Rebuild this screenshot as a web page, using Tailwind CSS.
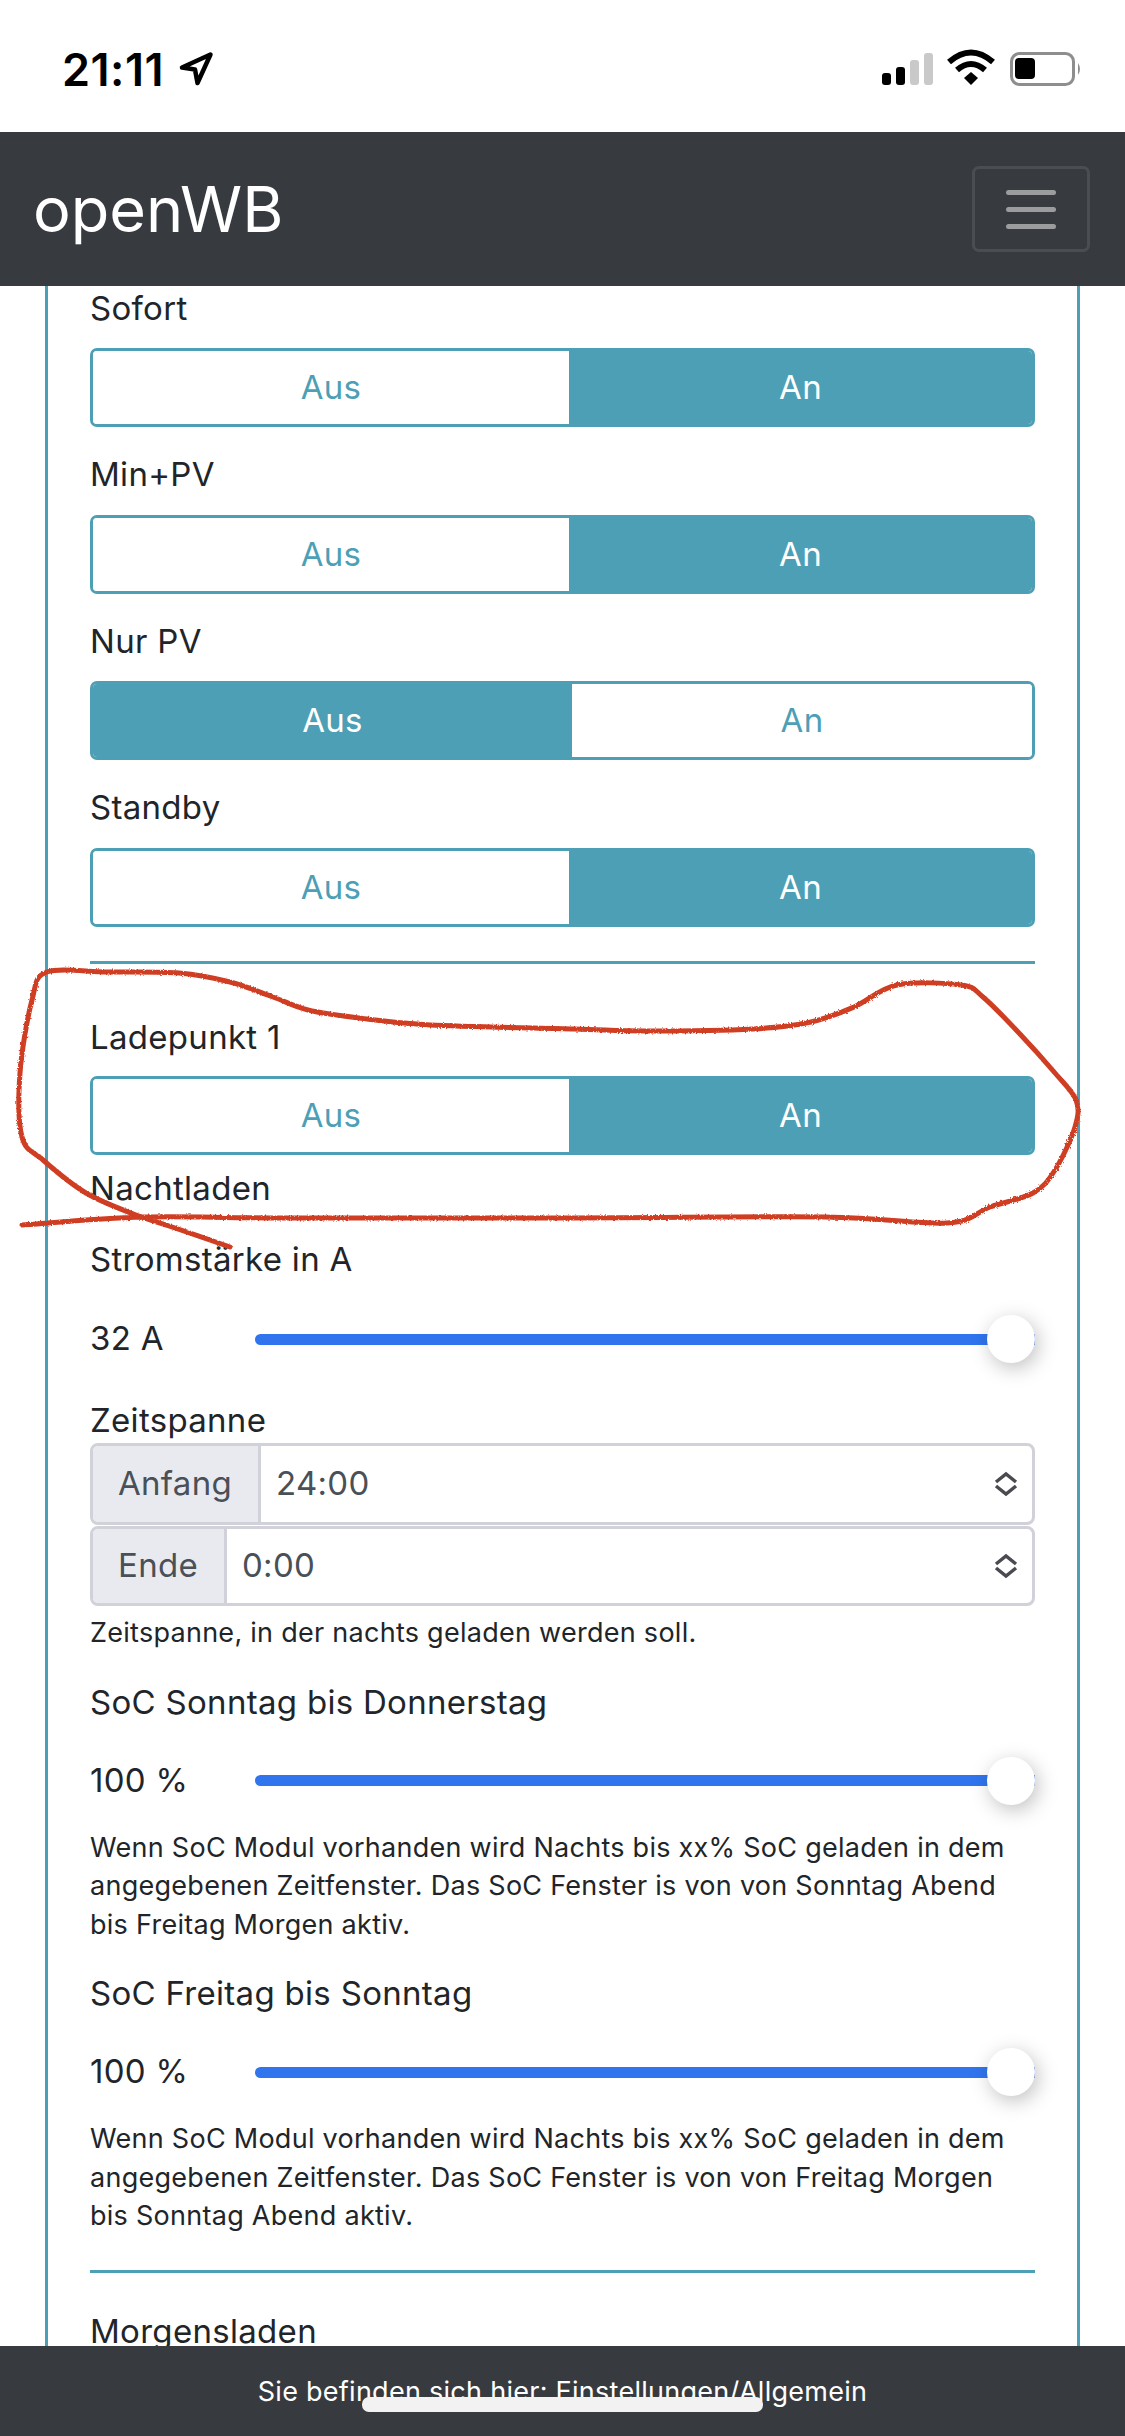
<!DOCTYPE html>
<html lang="de">
<head>
  <meta charset="UTF-8" />
  <title>openWB</title>
  <script src="https://cdn.jsdelivr.net/npm/@tailwindcss/browser@4"></script>
</head>
<body class="bg-white">
  <div class="relative w-[1125px] h-[2436px] overflow-hidden flex flex-col font-['Inter',sans-serif] text-[33px] tracking-[0.3px] text-[#212529]">

    <!-- Status bar -->
    <div class="h-[132px] shrink-0 flex justify-between bg-white text-black">
      <div class="flex items-center h-[138px] pl-[62px] gap-[14px]">
        <span class="text-[45px] font-semibold leading-none tracking-[0.5px]">21:11</span>
        <svg width="36" height="36" viewBox="0 0 36 36" fill="none" stroke="#000" stroke-width="4.5" stroke-linejoin="round"><path d="M32.5 3.5 L4 16.5 L17 18.5 L19.5 32 Z" /></svg>
      </div>
      <svg class="mr-[43px]" width="203" height="132" viewBox="879 0 203 132">
        <rect x="882" y="73" width="9" height="12" rx="3" fill="#000" />
        <rect x="896" y="67" width="9" height="18" rx="3" fill="#000" />
        <rect x="910" y="60" width="9" height="25" rx="3" fill="#c9c9c9" />
        <rect x="924" y="53" width="9" height="32" rx="3" fill="#c9c9c9" />
        <path d="M949 62 Q971 43 993 62" fill="none" stroke="#000" stroke-width="6" />
        <path d="M957 70 Q971 58 985 70" fill="none" stroke="#000" stroke-width="6" />
        <path d="M964 78 L971 72 L978 78 L971 85 Z" fill="#000" />
        <rect x="1011.5" y="53.5" width="62" height="31" rx="8" fill="none" stroke="#8e8e8e" stroke-width="3" />
        <rect x="1015" y="58" width="20" height="21" rx="4" fill="#000" />
        <path d="M1078 63 Q1082 69 1078 75 Z" fill="#8e8e8e" />
      </svg>
    </div>

    <!-- Navbar -->
    <nav class="h-[154px] shrink-0 bg-[#373b3f] flex items-center justify-between pl-[33px] pr-[35px] z-10">
      <span class="text-white text-[63px] leading-none tracking-normal">openWB</span>
      <div class="w-[118px] h-[86px] border-[3px] border-[#4a4e52] rounded-[7px] flex flex-col items-center justify-center gap-[12px]">
        <div class="w-[50px] h-[5px] rounded-full bg-[#9a9c9e]"></div>
        <div class="w-[50px] h-[5px] rounded-full bg-[#9a9c9e]"></div>
        <div class="w-[50px] h-[5px] rounded-full bg-[#9a9c9e]"></div>
      </div>
    </nav>

    <!-- Content -->
    <main class="flex-1 min-h-0 overflow-hidden">
      <div class="mx-[45px] px-[42px] border-x-[3px] border-[#4c9fb5] h-[2100px]">
        <div class="h-[50px] leading-[50px] -mt-[3px]">Sofort</div>
        <div class="h-[79px] mt-[15px] flex border-[3px] border-[#4c9fb5] rounded-[7px] overflow-hidden">
          <div class="w-[476px] flex items-center justify-center text-[#4c9fb5] bg-white">Aus</div>
          <div class="flex-1 flex items-center justify-center text-white bg-[#4c9fb5]">An</div>
        </div>

        <div class="h-[50px] leading-[50px] mt-[22px]">Min+PV</div>
        <div class="h-[79px] mt-[16px] flex border-[3px] border-[#4c9fb5] rounded-[7px] overflow-hidden">
          <div class="w-[476px] flex items-center justify-center text-[#4c9fb5] bg-white">Aus</div>
          <div class="flex-1 flex items-center justify-center text-white bg-[#4c9fb5]">An</div>
        </div>

        <div class="h-[50px] leading-[50px] mt-[22px]">Nur PV</div>
        <div class="h-[79px] mt-[15px] flex border-[3px] border-[#4c9fb5] rounded-[7px] overflow-hidden">
          <div class="w-[479px] flex items-center justify-center text-white bg-[#4c9fb5]">Aus</div>
          <div class="flex-1 flex items-center justify-center text-[#4c9fb5] bg-white">An</div>
        </div>

        <div class="h-[50px] leading-[50px] mt-[22px]">Standby</div>
        <div class="h-[79px] mt-[16px] flex border-[3px] border-[#4c9fb5] rounded-[7px] overflow-hidden">
          <div class="w-[476px] flex items-center justify-center text-[#4c9fb5] bg-white">Aus</div>
          <div class="flex-1 flex items-center justify-center text-white bg-[#4c9fb5]">An</div>
        </div>

        <div class="h-[3px] mt-[34px] bg-[#4c9fb5]"></div>

        <div class="h-[50px] leading-[50px] mt-[48px]">Ladepunkt 1</div>
        <div class="h-[79px] mt-[14px] flex border-[3px] border-[#4c9fb5] rounded-[7px] overflow-hidden">
          <div class="w-[476px] flex items-center justify-center text-[#4c9fb5] bg-white">Aus</div>
          <div class="flex-1 flex items-center justify-center text-white bg-[#4c9fb5]">An</div>
        </div>

        <div class="h-[50px] leading-[50px] mt-[8px]">Nachtladen</div>
        <div class="h-[50px] leading-[50px] mt-[21px]">Stromstärke in A</div>

        <div class="h-[50px] mt-[30px] flex items-center">
          <span class="w-[165px] shrink-0">32 A</span>
          <div class="flex-1 h-[11px] rounded-l-full bg-[#3075ee] flex items-center justify-end">
            <div class="w-[48px] h-[48px] shrink-0 rounded-full bg-white shadow-[3px_5px_20px_rgba(0,0,0,0.25)]"></div>
          </div>
        </div>

        <div class="h-[50px] leading-[50px] mt-[31px]">Zeitspanne</div>
        <div class="h-[82px] -mt-[2px] flex border-[3px] border-[#d0d1d9] rounded-[8px] overflow-hidden">
          <div class="w-[168px] shrink-0 flex items-center pl-[25px] bg-[#e9eaef] border-r-[3px] border-[#d0d1d9] text-[#495057]">Anfang</div>
          <div class="flex-1 flex items-center justify-between pl-[15px] pr-[14px] text-[#495057]">24:00
            <svg width="24" height="26" viewBox="0 0 24 26" fill="none" stroke="#4a4a50" stroke-width="3.5"><path d="M2 11 L12 3 L22 11" /><path d="M2 15 L12 23 L22 15" /></svg>
          </div>
        </div>
        <div class="h-[80px] mt-[1px] flex border-[3px] border-[#d0d1d9] rounded-[8px] overflow-hidden">
          <div class="w-[134px] shrink-0 flex items-center pl-[25px] bg-[#e9eaef] border-r-[3px] border-[#d0d1d9] text-[#495057]">Ende</div>
          <div class="flex-1 flex items-center justify-between pl-[15px] pr-[14px] text-[#495057]">0:00
            <svg width="24" height="26" viewBox="0 0 24 26" fill="none" stroke="#4a4a50" stroke-width="3.5"><path d="M2 11 L12 3 L22 11" /><path d="M2 15 L12 23 L22 15" /></svg>
          </div>
        </div>
        <p class="text-[27px] tracking-[0.27px] leading-[38.5px] mt-[8px]">Zeitspanne, in der nachts geladen werden soll.</p>

        <div class="h-[50px] leading-[50px] mt-[24px]">SoC Sonntag bis Donnerstag</div>
        <div class="h-[50px] mt-[29px] flex items-center">
          <span class="w-[165px] shrink-0">100 %</span>
          <div class="flex-1 h-[11px] rounded-l-full bg-[#3075ee] flex items-center justify-end">
            <div class="w-[48px] h-[48px] shrink-0 rounded-full bg-white shadow-[3px_5px_20px_rgba(0,0,0,0.25)]"></div>
          </div>
        </div>
        <p class="text-[27px] tracking-[0.27px] leading-[38.5px] mt-[23px] whitespace-nowrap">Wenn SoC Modul vorhanden wird Nachts bis xx% SoC geladen in dem<br />angegebenen Zeitfenster. Das SoC Fenster is von von Sonntag Abend<br />bis Freitag Morgen aktiv.</p>

        <div class="h-[50px] leading-[50px] mt-[24px]">SoC Freitag bis Sonntag</div>
        <div class="h-[50px] mt-[29px] flex items-center">
          <span class="w-[165px] shrink-0">100 %</span>
          <div class="flex-1 h-[11px] rounded-l-full bg-[#3075ee] flex items-center justify-end">
            <div class="w-[48px] h-[48px] shrink-0 rounded-full bg-white shadow-[3px_5px_20px_rgba(0,0,0,0.25)]"></div>
          </div>
        </div>
        <p class="text-[27px] tracking-[0.27px] leading-[38.5px] mt-[23px] whitespace-nowrap">Wenn SoC Modul vorhanden wird Nachts bis xx% SoC geladen in dem<br />angegebenen Zeitfenster. Das SoC Fenster is von von Freitag Morgen<br />bis Sonntag Abend aktiv.</p>

        <div class="h-[3px] mt-[34px] bg-[#4c9fb5]"></div>
        <div class="h-[50px] leading-[50px] mt-[33px]">Morgensladen</div>
      </div>
    </main>

    <!-- Footer -->
    <footer class="h-[90px] shrink-0 bg-[#373b3f] flex items-center justify-center text-[27px] tracking-[0.27px] text-white pt-[2px] z-10">Sie befinden sich hier: Einstellungen/Allgemein</footer>

    <!-- Home indicator, over the footer -->
    <div class="absolute left-[362px] top-[2397px] w-[401px] h-[15px] rounded-[7px] bg-[#f2f2f3] z-20"></div>

    <!-- Red marker scribble drawn over the screenshot -->
    <svg class="absolute inset-0 z-20 pointer-events-none" width="1125" height="2436" viewBox="0 0 1125 2436" fill="none" stroke="#cf3d22" stroke-width="5" stroke-linecap="round" stroke-linejoin="round">
      <filter id="rough"><feTurbulence type="fractalNoise" baseFrequency="0.6" numOctaves="2" /><feDisplacementMap in="SourceGraphic" scale="3" /></filter>
      <path id="scribble" filter="url(#rough)" />
    </svg>
  </div>

  <script>
    // marker line, traced from the screenshot, smoothed with catmull-rom
    const pts = [[230,1247],[172,1227],[136,1215],[86,1193],[43,1160],[22,1137],[20,1073],[32,1000],[47,972],[108,972],[179,973],[230,982],[273,997],[308,1010],[359,1018],[430,1025],[574,1029],[646,1031],[753,1029],[811,1022],[854,1007],[897,985],[961,985],[983,997],[1019,1033],[1055,1073],[1076,1100],[1075,1127],[1055,1170],[1033,1193],[990,1207],[947,1223],[825,1217],[574,1218],[287,1218],[143,1217],[22,1225]];
    let d = `M${pts[0][0]} ${pts[0][1]}`;
    for (let i = 0; i < pts.length - 1; i++) {
      const p0 = pts[Math.max(i - 1, 0)], p1 = pts[i], p2 = pts[i + 1], p3 = pts[Math.min(i + 2, pts.length - 1)];
      d += ` C${p1[0] + (p2[0] - p0[0]) / 6} ${p1[1] + (p2[1] - p0[1]) / 6} ${p2[0] - (p3[0] - p1[0]) / 6} ${p2[1] - (p3[1] - p1[1]) / 6} ${p2[0]} ${p2[1]}`;
    }
    document.getElementById('scribble').setAttribute('d', d);
  </script>
</body>
</html>
